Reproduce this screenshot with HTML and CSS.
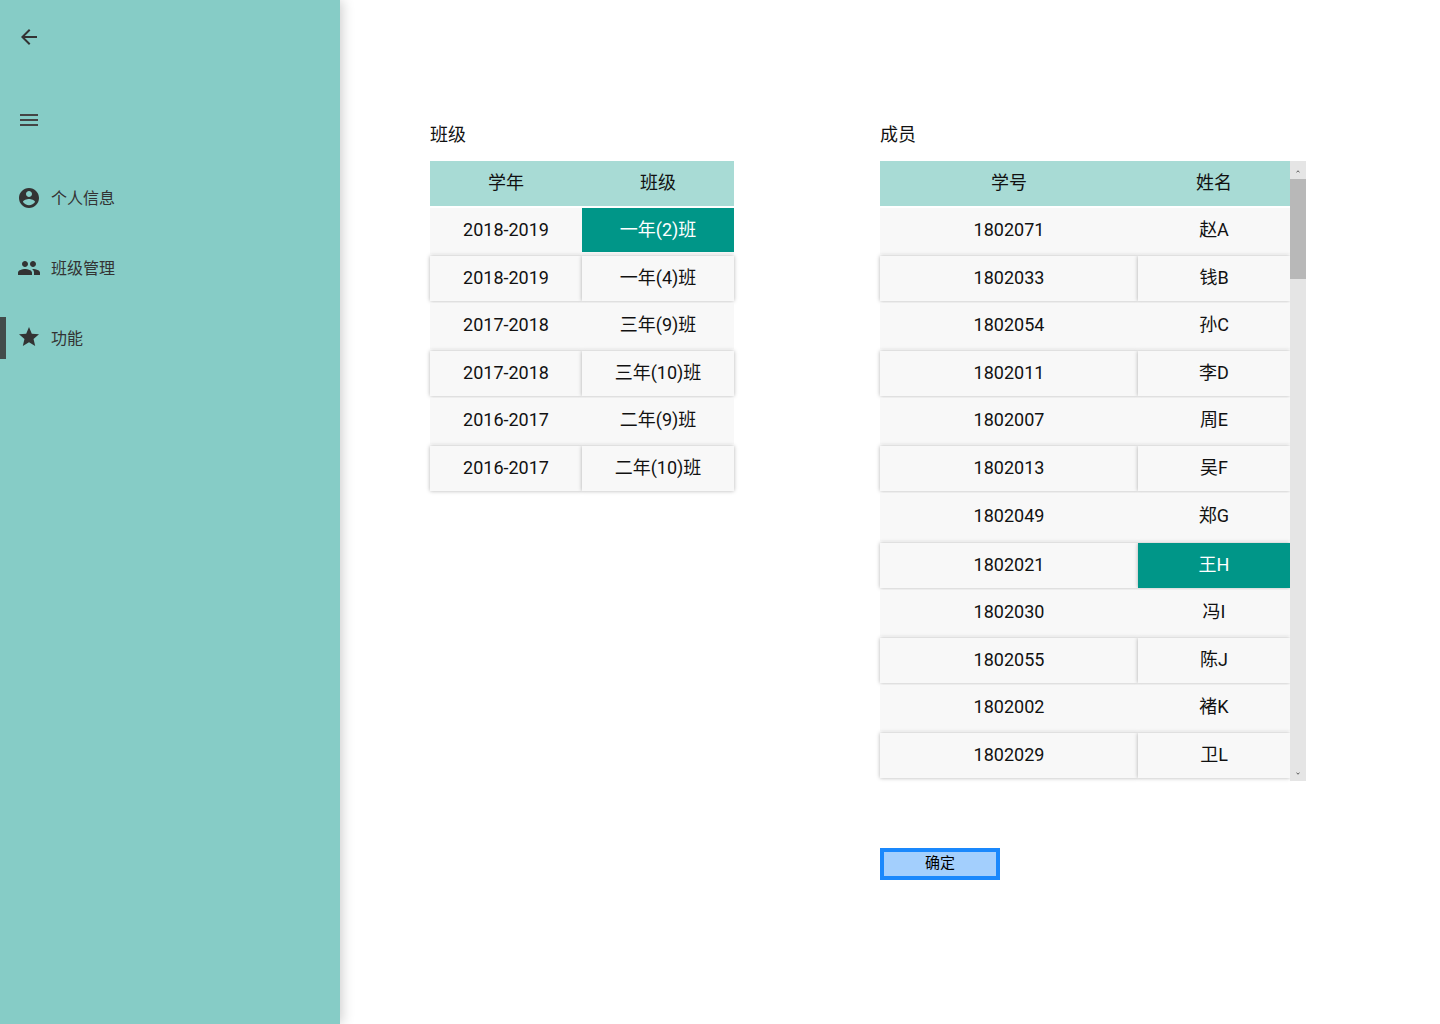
FILE: index.html
```html
<!DOCTYPE html>
<html lang="zh-CN">
<head>
<meta charset="utf-8">
<meta name="viewport" content="width=device-width, initial-scale=1">
<title>班级管理</title>
<link rel="stylesheet" href="styles.css">
</head>
<body>
<aside class="sidebar">
  <button class="icon-button back" type="button" aria-label="返回">
    <svg class="icon" viewBox="0 0 24 24"><path d="M20 11H7.83l5.59-5.59L12 4l-8 8 8 8 1.41-1.41L7.83 13H20v-2z"/></svg>
  </button>
  <button class="icon-button menu" type="button" aria-label="菜单">
    <svg class="icon" viewBox="0 0 24 24"><path d="M3 18h18v-2H3v2zm0-5h18v-2H3v2zm0-7v2h18V6H3z"/></svg>
  </button>
  <nav class="nav">
    <a class="nav-item" href="#profile">
      <svg class="icon" viewBox="0 0 24 24"><path d="M12 2C6.48 2 2 6.48 2 12s4.480 10 10 10 10-4.480 10-10S17.520 2 12 2zm0 3c1.660 0 3 1.340 3 3s-1.340 3-3 3-3-1.340-3-3 1.340-3 3-3zm0 14.200c-2.500 0-4.710-1.280-6-3.220.030-1.990 4-3.080 6-3.080 1.990 0 5.970 1.090 6 3.080-1.290 1.940-3.500 3.220-6 3.220z"/></svg>
      <span class="label">个人信息</span>
    </a>
    <a class="nav-item" href="#classes">
      <svg class="icon" viewBox="0 0 24 24"><path d="M16 11c1.660 0 2.990-1.340 2.990-3S17.660 5 16 5s-3 1.340-3 3 1.340 3 3 3zm-8 0c1.660 0 2.990-1.340 2.990-3S9.660 5 8 5 5 6.340 5 8s1.340 3 3 3zm0 2c-2.330 0-7 1.170-7 3.500V19h14v-2.500c0-2.330-4.670-3.500-7-3.500zm8 0c-.290 0-.620.020-.970.050 1.160.840 1.970 1.970 1.970 3.450V19h6v-2.500c0-2.330-4.670-3.500-7-3.500z"/></svg>
      <span class="label">班级管理</span>
    </a>
    <a class="nav-item active" href="#features" aria-current="page">
      <svg class="icon" viewBox="0 0 24 24"><path d="M12 16.270L18.180 20l-1.640-7.030L22 8.240l-7.190-.610L12 1 9.190 7.630 2 8.240l5.460 4.730L5.820 20z"/></svg>
      <span class="label">功能</span>
    </a>
  </nav>
</aside>
<main class="content">
  <section class="classes">
    <h2 class="title">班级</h2>
    <table class="grid">
      <thead><tr><th>学年</th><th>班级</th></tr></thead>
      <tbody>
        <tr><td>2018-2019</td><td class="selected">一年(2)班</td></tr>
        <tr><td>2018-2019</td><td>一年(4)班</td></tr>
        <tr><td>2017-2018</td><td>三年(9)班</td></tr>
        <tr><td>2017-2018</td><td>三年(10)班</td></tr>
        <tr><td>2016-2017</td><td>二年(9)班</td></tr>
        <tr><td>2016-2017</td><td>二年(10)班</td></tr>
      </tbody>
    </table>
  </section>
  <section class="members">
    <h2 class="title">成员</h2>
    <div class="list">
      <div class="viewport">
        <table class="grid">
          <thead><tr><th>学号</th><th class="name">姓名</th></tr></thead>
          <tbody>
            <tr><td>1802071</td><td>赵A</td></tr>
            <tr><td>1802033</td><td>钱B</td></tr>
            <tr><td>1802054</td><td>孙C</td></tr>
            <tr><td>1802011</td><td>李D</td></tr>
            <tr><td>1802007</td><td>周E</td></tr>
            <tr><td>1802013</td><td>吴F</td></tr>
            <tr class="tall"><td>1802049</td><td>郑G</td></tr>
            <tr><td>1802021</td><td class="selected">王H</td></tr>
            <tr><td>1802030</td><td>冯I</td></tr>
            <tr><td>1802055</td><td>陈J</td></tr>
            <tr><td>1802002</td><td>褚K</td></tr>
            <tr><td>1802029</td><td>卫L</td></tr>
          </tbody>
        </table>
      </div>
      <div class="scrollbar">
        <button class="step" type="button" aria-label="向上滚动"><svg class="caret" viewBox="0 0 4 3"><path d="M0.500 2.200L2 0.800l1.500 1.400"/></svg></button>
        <div class="thumb"></div>
        <button class="step down" type="button" aria-label="向下滚动"><svg class="caret" viewBox="0 0 4 3"><path d="M0.500 0.800L2 2.200l1.500-1.400"/></svg></button>
      </div>
    </div>
    <button class="confirm" type="button">确定</button>
  </section>
</main>
</body>
</html>
```
FILE: styles.css
```css
* {
  box-sizing: border-box;
}

body {
  display: flex;
  min-height: 100vh;
  margin: 0;
  background: #fff;
  color: #111;
  font-family: Roboto, "Noto Sans CJK SC", sans-serif;
  font-size: 18px;
  font-weight: 400;
}

button {
  padding: 0;
  border: 0;
  background: none;
  color: inherit;
  font: inherit;
  cursor: pointer;
}

.sidebar {
  display: flex;
  flex: 0 0 340px;
  flex-direction: column;
  align-items: flex-start;
  padding-top: 25px;
  background: #86ccc6;
  box-shadow: 2px 0 12px rgba(0, 0, 0, 0.2);
  color: #333;
}

.icon {
  display: block;
  flex: none;
  width: 24px;
  height: 24px;
  fill: currentColor;
}

.icon-button {
  margin-left: 17px;
}

.menu {
  margin-top: 59px;
  color: #444;
}

.nav {
  display: flex;
  flex-direction: column;
  gap: 28px;
  width: 100%;
  margin-top: 45px;
}

.nav-item {
  display: flex;
  align-items: center;
  gap: 10px;
  height: 42px;
  padding-left: 11px;
  border-left: 6px solid transparent;
  color: #333;
  font-size: 16px;
  text-decoration: none;
}

.label {
  padding-bottom: 3px;
}

.active {
  border-color: #424b4a;
}

.content {
  display: flex;
  flex: 1;
  gap: 146px;
  align-items: flex-start;
  padding: 122px 90px 40px;
}

.classes {
  flex: 0 1 304px;
}

.members {
  flex: 0 1 426px;
}

.title {
  margin: 0 0 13px;
  font-size: 18px;
  font-weight: 400;
  line-height: 26px;
}

.list {
  display: flex;
}

.viewport {
  flex: 1;
  padding-bottom: 1px;
}

.grid {
  width: 100%;
  margin-top: -2px;
  border-spacing: 0 2px;
  table-layout: fixed;
  text-align: center;
  line-height: 24px;
}

.name {
  width: 152px;
}

.grid th {
  height: 45px;
  padding: 0 0 1px;
  background: #a8dbd5;
  font-weight: 400;
}

.grid td {
  height: 46px;
  padding: 0;
  border-bottom: 2px solid #f8f8f8;
  background: #f8f8f8 padding-box;
}

.grid tr:nth-child(even) td {
  height: 45px;
  padding-bottom: 1px;
  border: 0;
  box-shadow: 0 0 4px rgba(0, 0, 0, 0.3);
}

.grid .tall td {
  height: 48px;
}

.grid .selected {
  background-color: #009688;
  color: #fff;
}

.scrollbar {
  position: relative;
  display: flex;
  flex: 0 0 16px;
  flex-direction: column;
  background: #e5e5e5;
}

.step {
  display: grid;
  place-items: center;
  height: 18px;
  padding-top: 3px;
}

.caret {
  width: 4px;
  height: 3px;
  fill: none;
  stroke: #555;
}

.thumb {
  height: 100px;
  background: #b8b8b8;
}

.down {
  margin-top: auto;
}

.confirm {
  width: 120px;
  height: 32px;
  margin-top: 67px;
  padding-bottom: 2px;
  border: 4px solid #1a88fc;
  background: #a3cffd;
  color: #000;
  font-size: 15px;
  line-height: 20px;
}
```
